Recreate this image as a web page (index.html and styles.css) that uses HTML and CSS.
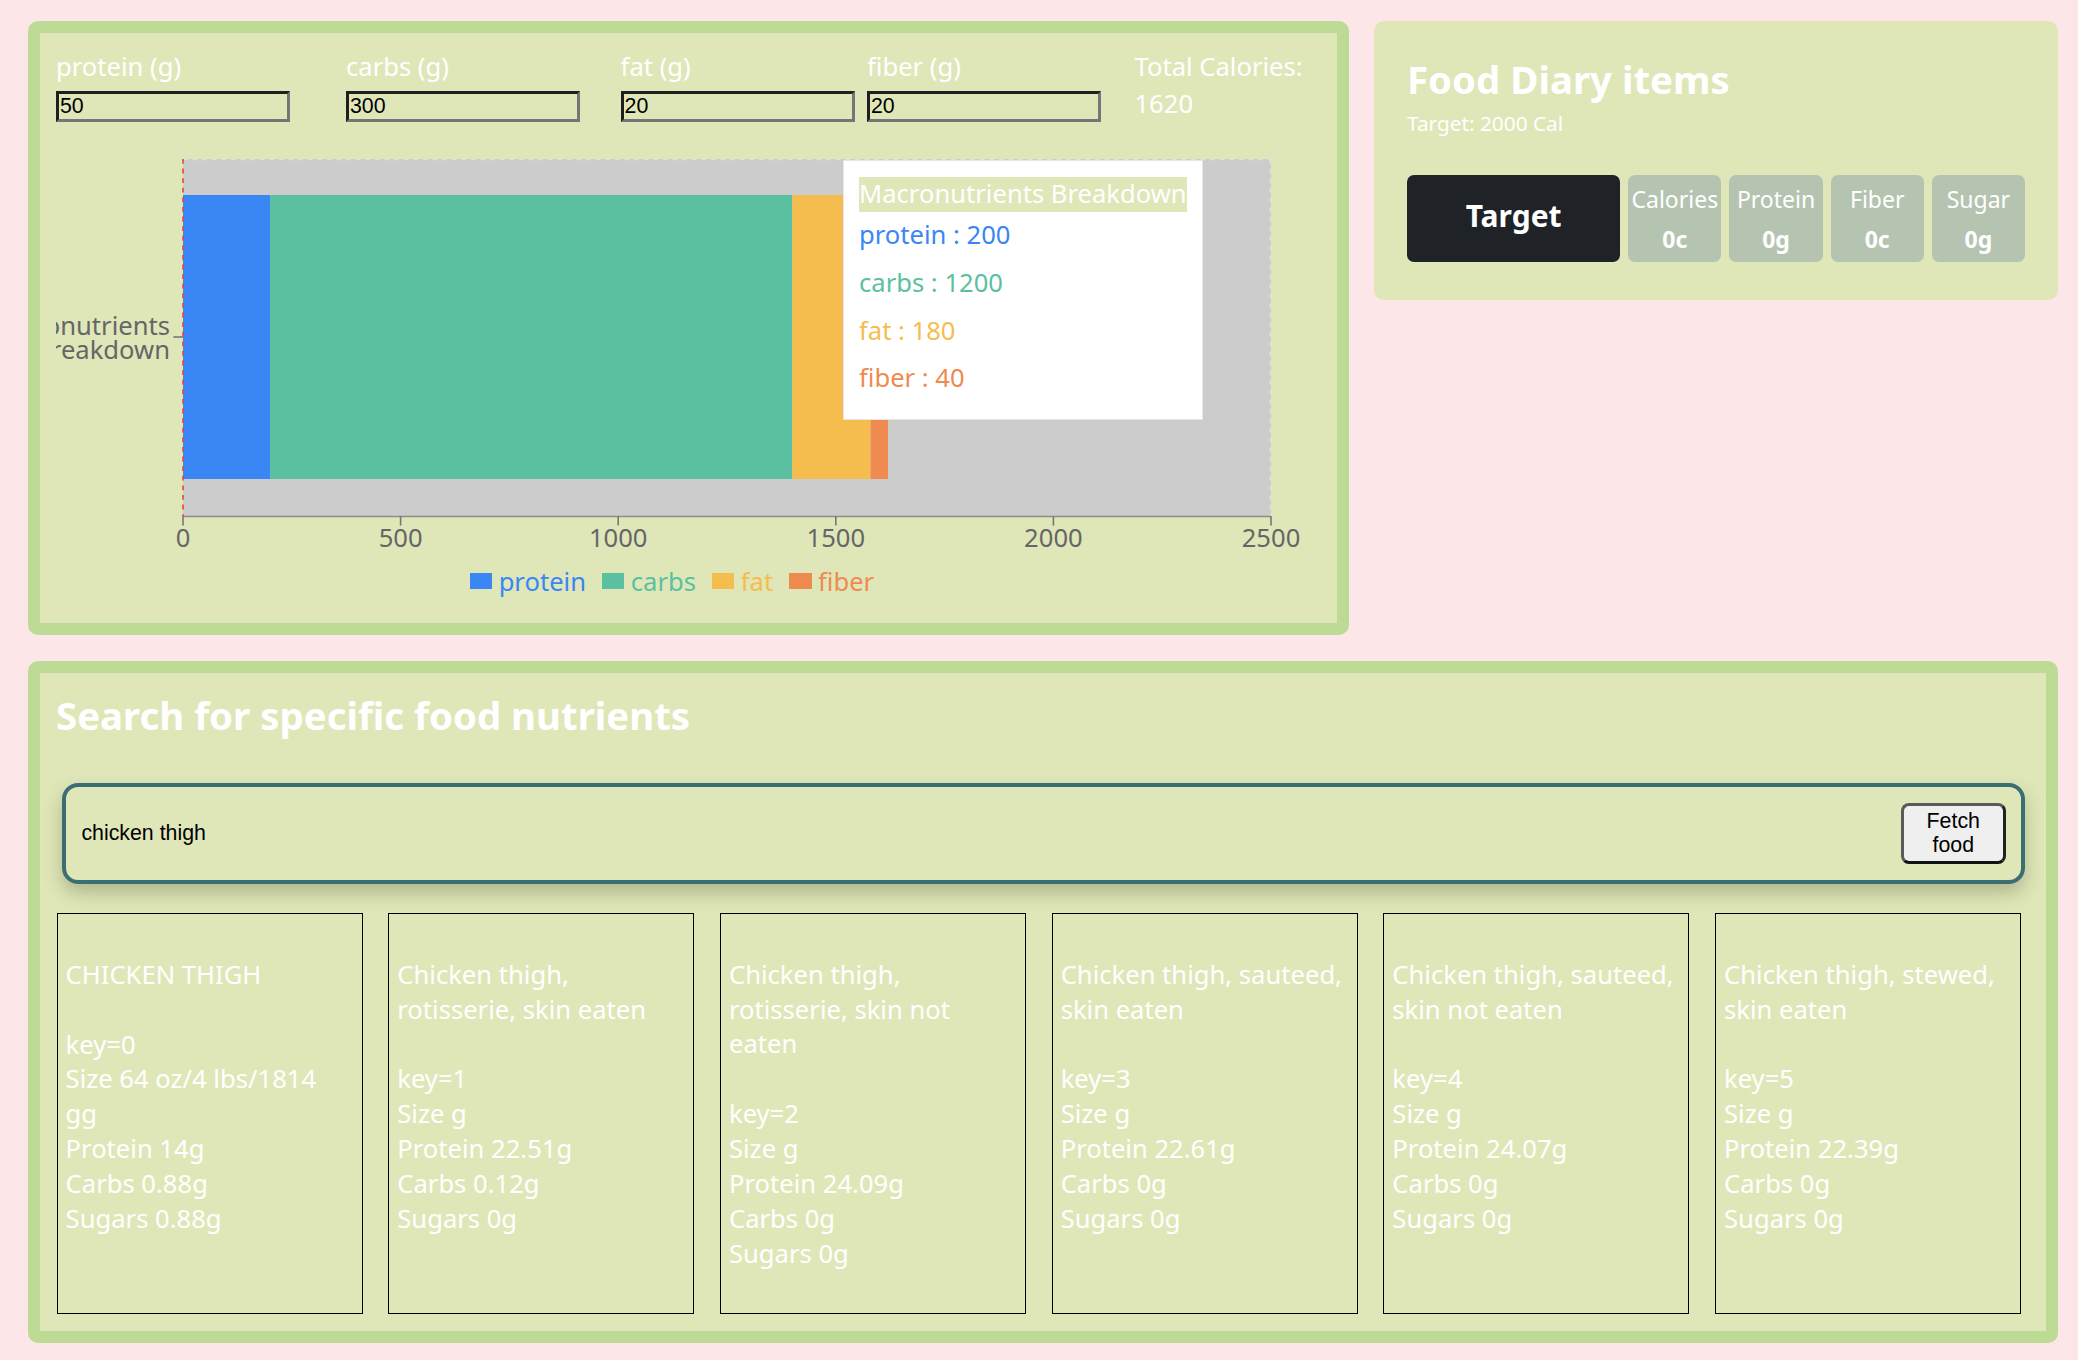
FILE: index.html
```html
<!DOCTYPE html>
<html lang="en">
<head>
<meta charset="utf-8">
<title>Food Diary</title>
<link rel="stylesheet" href="styles.css">
</head>
<body>
<div class="top-row">
  <section class="panel chart-panel">
    <div class="macro-inputs">
      <div class="macro-field"><label>protein (g)</label><input type="text" value="50"></div>
      <div class="macro-field"><label>carbs (g)</label><input type="text" value="300"></div>
      <div class="macro-field"><label>fat (g)</label><input type="text" value="20"></div>
      <div class="macro-field"><label>fiber (g)</label><input type="text" value="20"></div>
      <div class="total"><span>Total Calories:</span><span class="total-value">1620</span></div>
    </div>
    <div class="chart-wrap">
      <svg class="chart" width="1248" height="440" viewBox="0 0 1248 440">
        <rect x="127" y="34" width="1088" height="357" fill="#cccccc"/>
        <line x1="127" y1="34.5" x2="1215" y2="34.5" stroke="#e0e0e0" stroke-width="1.6" stroke-dasharray="4.8 4.8"/>
        <line x1="1214.5" y1="34" x2="1214.5" y2="391" stroke="#e0e0e0" stroke-width="1.6" stroke-dasharray="4.8 4.8"/>
        <rect x="127" y="70" width="87.04" height="284" fill="#3a86f5"/>
        <rect x="214.04" y="70" width="522.24" height="284" fill="#5bc0a1"/>
        <rect x="736.28" y="70" width="78.34" height="284" fill="#f5bd4d"/>
        <rect x="814.62" y="70" width="17.41" height="284" fill="#ef8a51"/>
        <line x1="127" y1="34" x2="127" y2="391" stroke="#e8443a" stroke-width="1.6" stroke-dasharray="4.8 4.8"/>
        <line x1="127" y1="391.5" x2="1215" y2="391.5" stroke="#8c8c8c" stroke-width="1.6"/>
        <g stroke="#777" stroke-width="1.6">
          <line x1="127" y1="391" x2="127" y2="400.6"/>
          <line x1="344.6" y1="391" x2="344.6" y2="400.6"/>
          <line x1="562.2" y1="391" x2="562.2" y2="400.6"/>
          <line x1="779.8" y1="391" x2="779.8" y2="400.6"/>
          <line x1="997.4" y1="391" x2="997.4" y2="400.6"/>
          <line x1="1215" y1="391" x2="1215" y2="400.6"/>
          <line x1="117.4" y1="212" x2="127" y2="212"/>
        </g>
        <g class="tick" text-anchor="middle">
          <text x="127" y="422">0</text>
          <text x="344.6" y="422">500</text>
          <text x="562.2" y="422">1000</text>
          <text x="779.8" y="422">1500</text>
          <text x="997.4" y="422">2000</text>
          <text x="1215" y="422">2500</text>
        </g>
        <g class="tick" text-anchor="end">
          <text x="114" y="209.5">Macronutrients</text>
          <text x="114" y="234">Breakdown</text>
        </g>
      </svg>
      <ul class="legend">
        <li class="lg-protein"><span class="swatch"></span>protein</li>
        <li class="lg-carbs"><span class="swatch"></span>carbs</li>
        <li class="lg-fat"><span class="swatch"></span>fat</li>
        <li class="lg-fiber"><span class="swatch"></span>fiber</li>
      </ul>
      <div class="tooltip">
        <p class="tooltip-label">Macronutrients Breakdown</p>
        <ul class="tooltip-items">
          <li class="tt-protein">protein : 200</li>
          <li class="tt-carbs">carbs : 1200</li>
          <li class="tt-fat">fat : 180</li>
          <li class="tt-fiber">fiber : 40</li>
        </ul>
      </div>
    </div>
  </section>

  <section class="diary-panel">
    <h2 class="diary-title">Food Diary items</h2>
    <p class="diary-sub">Target: 2000 Cal</p>
    <div class="diary-stats">
      <div class="target-btn">Target</div>
      <div class="stat"><span>Calories</span><strong>0c</strong></div>
      <div class="stat"><span>Protein</span><strong>0g</strong></div>
      <div class="stat"><span>Fiber</span><strong>0c</strong></div>
      <div class="stat"><span>Sugar</span><strong>0g</strong></div>
    </div>
  </section>
</div>

<section class="panel search-panel">
  <h2 class="search-title">Search for specific food nutrients</h2>
  <div class="search-box">
    <input class="search-input" type="text" value="chicken thigh">
    <button class="fetch-btn">Fetch<br>food</button>
  </div>
  <div class="food-list">
    <div class="food-card">
      <p class="food-name">CHICKEN THIGH</p>
      <p class="food-facts">key=0<br>Size 64 oz/4 lbs/1814 gg<br>Protein 14g<br>Carbs 0.88g<br>Sugars 0.88g</p>
    </div>
    <div class="food-card">
      <p class="food-name">Chicken thigh, rotisserie, skin eaten</p>
      <p class="food-facts">key=1<br>Size g<br>Protein 22.51g<br>Carbs 0.12g<br>Sugars 0g</p>
    </div>
    <div class="food-card">
      <p class="food-name">Chicken thigh, rotisserie, skin not eaten</p>
      <p class="food-facts">key=2<br>Size g<br>Protein 24.09g<br>Carbs 0g<br>Sugars 0g</p>
    </div>
    <div class="food-card">
      <p class="food-name">Chicken thigh, sauteed, skin eaten</p>
      <p class="food-facts">key=3<br>Size g<br>Protein 22.61g<br>Carbs 0g<br>Sugars 0g</p>
    </div>
    <div class="food-card">
      <p class="food-name">Chicken thigh, sauteed, skin not eaten</p>
      <p class="food-facts">key=4<br>Size g<br>Protein 24.07g<br>Carbs 0g<br>Sugars 0g</p>
    </div>
    <div class="food-card">
      <p class="food-name">Chicken thigh, stewed, skin eaten</p>
      <p class="food-facts">key=5<br>Size g<br>Protein 22.39g<br>Carbs 0g<br>Sugars 0g</p>
    </div>
  </div>
</section>
</body>
</html>
```

FILE: styles.css
```css
* { box-sizing: border-box; }

html, body { margin: 0; }

body {
  background: #fce6e7;
  padding: 21px 20px 0 28px;
  font-family: "Noto Sans", "DejaVu Sans", sans-serif;
  font-size: 25.6px;
  line-height: 1.362;
  color: #ffffff;
  overflow: hidden;
  height: 1360px;
}

.top-row {
  display: flex;
  align-items: flex-start;
  gap: 25px;
}

.panel {
  background: #dfe7b9;
  border: 12.8px solid #bddb94;
  border-radius: 10px;
  padding: 16px;
}

.chart-panel {
  width: 1321px;
  height: 614px;
  padding-top: 17.4px;
}

.macro-inputs {
  display: grid;
  grid-template-columns: 290px 274.6px 246.4px 267.5px auto;
}

.macro-field label { display: block; }

.macro-field input {
  display: block;
  margin-top: 5.5px;
  width: 234px;
  height: 31px;
  padding: 0 1px;
  border: 3px solid;
  border-color: #1f1f1f #767676 #767676 #1f1f1f;
  background: transparent;
  font-family: "Liberation Sans", Arial, sans-serif;
  font-size: 21.33px;
  color: #000;
}

.total {
  display: flex;
  flex-direction: column;
  white-space: nowrap;
}

.total-value { margin-top: 1.4px; }

.chart-wrap {
  position: relative;
  width: 1248px;
  margin-top: 2.9px;
}

.chart { display: block; overflow: hidden; }

.tick text {
  font-family: "Noto Sans", sans-serif;
  font-size: 25.6px;
  fill: #666666;
}

.legend {
  list-style: none;
  margin: 0;
  padding: 0;
  display: flex;
  justify-content: center;
}

.legend li {
  display: flex;
  align-items: center;
  margin-right: 16px;
}

.swatch {
  display: inline-block;
  width: 22.4px;
  height: 16.8px;
  margin-right: 6.4px;
  position: relative;
  top: -1px;
}

.lg-protein { color: #3a86f5; }
.lg-protein .swatch { background: #3a86f5; }
.lg-carbs { color: #5bc0a1; }
.lg-carbs .swatch { background: #5bc0a1; }
.lg-fat { color: #f5bd4d; }
.lg-fat .swatch { background: #f5bd4d; }
.lg-fiber { color: #ef8a51; }
.lg-fiber .swatch { background: #ef8a51; }

.tooltip {
  position: absolute;
  left: 787px;
  top: 35px;
  background: #ffffff;
  border: 1px solid #e6e6e6;
  padding: 16.4px 15px 16.3px;
  white-space: nowrap;
}

.tooltip-label {
  margin: 0;
  background: #dfe7b9;
  color: #ffffff;
}

.tooltip-items {
  list-style: none;
  margin: 0;
  padding: 0;
}

.tooltip-items li { padding: 6.4px 0; }
.tt-protein { color: #3a86f5; }
.tt-carbs { color: #5bc0a1; }
.tt-fat { color: #f5bd4d; }
.tt-fiber { color: #ef8a51; }

.diary-panel {
  width: 684px;
  height: 279px;
  background: #dfe7b9;
  border-radius: 10px;
  padding: 32px 33px;
}

.diary-title {
  margin: 0;
  font-size: 38.4px;
  font-weight: 700;
}

.diary-sub {
  margin: 3.7px 0 0;
  font-size: 20.8px;
}

.diary-stats {
  display: flex;
  gap: 8px;
  margin-top: 37.7px;
}

.target-btn {
  width: 214px;
  height: 87px;
  background: #1f2226;
  border-radius: 7px;
  display: flex;
  align-items: center;
  justify-content: center;
  font-weight: 700;
  font-size: 30px;
  padding-bottom: 4px;
}

.stat {
  width: 93.5px;
  height: 87px;
  background: #b5c4b1;
  border-radius: 7px;
  display: flex;
  flex-direction: column;
  align-items: center;
  padding-top: 8.7px;
  gap: 8.7px;
  font-size: 23px;
  white-space: nowrap;
}

.stat strong { font-weight: 700; }

.search-panel {
  margin-top: 26px;
  width: 2030px;
  height: 682px;
}

.search-title {
  margin: 0;
  font-size: 38.4px;
  font-weight: 700;
}

.search-box {
  margin: 41.3px 5px 0 5.8px;
  height: 101px;
  border: 4.8px solid #3b6e73;
  border-radius: 16px;
  display: flex;
  align-items: center;
  padding: 0 15px 0 15.6px;
  box-shadow: 0 9px 18px rgba(60, 60, 30, 0.28);
}

.search-input {
  flex: 1;
  border: none;
  background: transparent;
  outline: none;
  padding: 0;
  font-family: "Liberation Sans", Arial, sans-serif;
  font-size: 21.33px;
  color: #000;
}

.fetch-btn {
  width: 105.5px;
  height: 61px;
  background: #efefef;
  border: 3px solid;
  border-color: #5a5a5a #222 #111 #5a5a5a;
  border-radius: 8px;
  font-family: "Liberation Sans", Arial, sans-serif;
  font-size: 21.33px;
  line-height: 1.15;
  color: #000;
  padding: 0;
}

.food-list {
  display: grid;
  grid-template-columns: repeat(6, 306px);
  column-gap: 25.7px;
  margin-top: 29px;
  margin-left: 0.6px;
}

.food-card {
  height: 401px;
  border: 1.6px solid #000;
  padding: 16px 10px 16px 8px;
}

.food-name { margin: 28.2px 0 34.9px; }

.food-facts { margin: 0; }
```
